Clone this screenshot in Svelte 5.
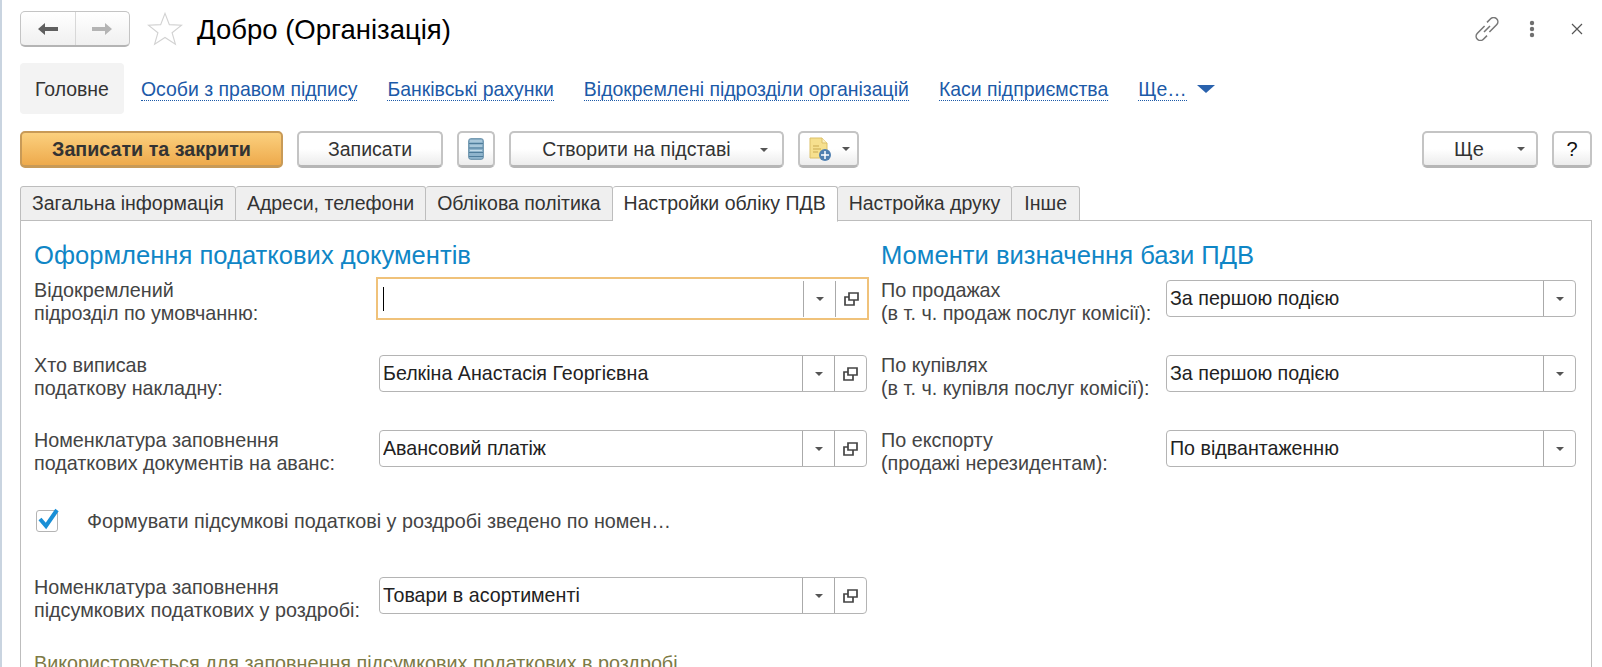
<script lang="ts">
  const links = ['Особи з правом підпису', 'Банківські рахунки', 'Відокремлені підрозділи організацій', 'Каси підприємства'];
  const tabs = ['Загальна інформація', 'Адреси, телефони', 'Облікова політика', 'Настройки обліку ПДВ', 'Настройка друку', 'Інше'];
  const activeTab = 3;
  const moments = [
    { label: ['По продажах', '(в т. ч. продаж послуг комісії):'], value: 'За першою подією' },
    { label: ['По купівлях', '(в т. ч. купівля послуг комісії):'], value: 'За першою подією' },
    { label: ['По експорту', '(продажі нерезидентам):'], value: 'По відвантаженню' }
  ];
</script>

{#snippet openIcon()}
  <svg class="open-icon" viewBox="0 0 15 14" width="15" height="14">
    <path d="M5 1h9v7H5z M5 5H1v8h9V8" fill="none" stroke="#444" stroke-width="1.700" />
  </svg>
{/snippet}

{#snippet field(value: string, focused = false, open = true)}
  <div class="field" class:focused>
    <span class="value">{value}</span>
    {#if focused}<span class="caret"></span>{/if}
    <span class="field-btn"><span class="arrow"></span></span>
    {#if open}<span class="field-btn">{@render openIcon()}</span>{/if}
  </div>
{/snippet}

<div class="page">
  <header class="header">
    <div class="history">
      <button class="hist-btn" aria-label="Назад">
        <svg viewBox="0 0 22 14" width="22" height="14"><path d="M1 7l7-6v4h13v4H8v4z" fill="#5f5f5f" /></svg>
      </button>
      <button class="hist-btn" aria-label="Вперед">
        <svg viewBox="0 0 22 14" width="22" height="14"><path d="M21 7l-7-6v4H1v4h13v4z" fill="#b4b4b4" /></svg>
      </button>
    </div>
    <svg class="star" viewBox="0 0 38 36" width="36" height="34">
      <path d="M19 1.500l4.600 11.900 13 .6-10.100 8 3.500 12-11-7-11 7 3.500-12-10.100-8 13-.6z" fill="none" stroke="#d2d2d2" stroke-width="1.200" />
    </svg>
    <h1 class="title">Добро (Організація)</h1>
    <div class="win-icons">
      <svg viewBox="2 2 20 20" width="24" height="24">
        <path d="M10 9.500l-6 6a3.500 3.500 0 0 0 5 5l3-3M14 14.500l6-6a3.500 3.500 0 0 0-5-5l-3 3M9.500 14.500l5-5" fill="none" stroke="#777" stroke-width="1.300" />
      </svg>
      <svg viewBox="0 0 6 18" width="6" height="18">
        <circle cx="3" cy="3" r="2.200" fill="#6f6f6f" /><circle cx="3" cy="9" r="2.200" fill="#6f6f6f" /><circle cx="3" cy="15" r="2.200" fill="#6f6f6f" />
      </svg>
      <svg class="close" viewBox="0 0 12 12" width="12" height="12">
        <path d="M1 1l10 10M11 1L1 11" stroke="#555" stroke-width="1.200" />
      </svg>
    </div>
  </header>

  <nav class="nav">
    <span class="nav-current">Головне</span>
    {#each links as link}
      <a class="nav-link" href="#top">{link}</a>
    {/each}
    <a class="nav-link more" href="#top">Ще…</a>
    <span class="more-arrow"></span>
  </nav>

  <div class="toolbar">
    <button class="btn primary">Записати та закрити</button>
    <button class="btn save">Записати</button>
    <button class="btn icon" aria-label="Структура">
      <svg viewBox="0 0 16 22" width="16" height="22">
        <rect x="0.700" y="0.700" width="14.600" height="20.600" rx="2" fill="#8fb4cc" stroke="#5f8aa6" />
        <path d="M1 5.500h14M1 10h14M1 14.500h14M1 18.500h14" stroke="#4f7d9b" stroke-width="1.200" />
        <path d="M2 3h12M2 8h12M2 12.500h12" stroke="#c3dbe8" />
      </svg>
    </button>
    <button class="btn create">
      <span>Створити на підставі</span>
      <span class="arrow"></span>
    </button>
    <button class="btn report" aria-label="Створити">
      <svg viewBox="0 0 24 24" width="24" height="24">
        <path d="M2 1h12l5 5v15H2z" fill="#f6e08e" stroke="#dcc069" />
        <path d="M14 1v5h5" fill="#fbf0c0" stroke="#dcc069" />
        <path d="M5 9h6M5 12h8M5 15h5" stroke="#c8a950" />
        <circle cx="17" cy="18" r="6" fill="#4f7fb0" />
        <path d="M17 14v8M13 18h8" stroke="#fff" stroke-width="1.500" />
      </svg>
      <span class="arrow"></span>
    </button>
    <div class="toolbar-right">
      <button class="btn more-btn">
        <span class="more-text">Ще</span>
        <span class="arrow"></span>
      </button>
      <button class="btn help">?</button>
    </div>
  </div>

  <div class="tabs">
    {#each tabs as tab, i}
      <div class="tab" class:active={i === activeTab}>{tab}</div>
    {/each}
  </div>

  <section class="panel">
    <div class="columns">
      <div class="col-left">
        <h2 class="group-title">Оформлення податкових документів</h2>
        <div class="row">
          <div class="label">Відокремлений<br />підрозділ по умовчанню:</div>
          {@render field('', true)}
        </div>
        <div class="row">
          <div class="label">Хто виписав<br />податкову накладну:</div>
          {@render field('Белкіна Анастасія Георгієвна')}
        </div>
        <div class="row">
          <div class="label">Номенклатура заповнення<br />податкових документів на аванс:</div>
          {@render field('Авансовий платіж')}
        </div>
        <div class="check-row">
          <span class="checkbox">
            <svg viewBox="0 0 24 24" width="24" height="24">
              <path d="M4 12l6 7L21 3" fill="none" stroke="#1a8fd6" stroke-width="4" />
            </svg>
          </span>
          <span class="check-label">Формувати підсумкові податкові у роздробі зведено по номен…</span>
        </div>
        <div class="row last">
          <div class="label">Номенклатура заповнення<br />підсумкових податкових у роздробі:</div>
          {@render field('Товари в асортименті')}
        </div>
      </div>
      <div class="col-right">
        <h2 class="group-title">Моменти визначення бази ПДВ</h2>
        {#each moments as m}
          <div class="row">
            <div class="label">{m.label[0]}<br />{m.label[1]}</div>
            {@render field(m.value, false, false)}
          </div>
        {/each}
      </div>
    </div>
    <p class="note">Використовується для заповнення підсумкових податкових в роздробі</p>
  </section>
</div>

<style>
  :global(body) {
    margin: 0;
    background: #fff;
  }

  .page {
    box-sizing: border-box;
    height: 667px;
    overflow: hidden;
    padding: 11px 10px 0 18px;
    border-left: 2px solid #c9d4e0;
    font-family: "Liberation Sans", Arial, sans-serif;
    font-size: 19.750px;
    color: #333;
  }

  button {
    font-family: inherit;
    padding: 0;
    cursor: pointer;
  }

  .header {
    display: flex;
    align-items: center;
    height: 36px;
  }

  .history {
    display: flex;
    width: 110px;
    height: 36px;
    box-sizing: border-box;
    border: 1px solid #c4c4c4;
    border-bottom: 2px solid #b4b4b4;
    border-radius: 5px;
    background: linear-gradient(#fff, #f0f0f0);
  }

  .hist-btn {
    flex: 1;
    border: none;
    background: none;
    display: flex;
    align-items: center;
    justify-content: center;
  }

  .hist-btn + .hist-btn {
    border-left: 1px solid #d8d8d8;
  }

  .star {
    margin-left: 17px;
  }

  .title {
    margin: 2px 0 0 14px;
    font-size: 27.500px;
    font-weight: normal;
    color: #000;
  }

  .win-icons {
    margin-left: auto;
    display: flex;
    align-items: center;
    gap: 30px;
    margin-right: 9px;
  }

  .close {
    margin-left: 6px;
  }

  .nav {
    display: flex;
    align-items: center;
    height: 51px;
    margin-top: 16px;
    font-size: 19.450px;
  }

  .nav-current {
    box-sizing: border-box;
    width: 104px;
    height: 51px;
    line-height: 53px;
    text-align: center;
    background: #f3f3f3;
    border-radius: 4px;
    margin-right: 17px;
  }

  .nav-link {
    color: #1c5aa8;
    text-decoration: none;
    border-bottom: 1px dotted #1c5aa8;
    line-height: 22px;
    margin-top: 2px;
    margin-right: 30px;
  }

  .nav-link.more {
    margin-right: 10px;
  }

  .more-arrow {
    width: 0;
    height: 0;
    border-left: 9px solid transparent;
    border-right: 9px solid transparent;
    border-top: 8px solid #2a62ad;
  }

  .toolbar {
    display: flex;
    align-items: center;
    gap: 14px;
    margin-top: 17px;
  }

  .btn {
    box-sizing: border-box;
    height: 37px;
    border: 2px solid #c4c4c4;
    border-bottom: 3px solid #b6b6b6;
    border-radius: 5px;
    background: linear-gradient(#fff 50%, #ececec);
    font-size: 19.500px;
    color: #333;
    display: flex;
    align-items: center;
    justify-content: center;
  }

  .btn.primary {
    width: 263px;
    background: linear-gradient(#fbd07e, #eeaa4c);
    border-color: #c89a57;
    font-size: 19.700px;
    font-weight: bold;
  }

  .btn.save {
    width: 146px;
  }

  .btn.icon {
    width: 38px;
  }

  .btn.create {
    width: 275px;
    position: relative;
    padding-right: 20px;
  }

  .btn.create .arrow {
    position: absolute;
    right: 14px;
    top: 15px;
  }

  .btn.report {
    width: 61px;
    gap: 10px;
  }

  .toolbar-right {
    margin-left: auto;
    display: flex;
    gap: 14px;
  }

  .btn.more-btn {
    width: 116px;
    gap: 28px;
    padding-left: 14px;
    font-size: 20px;
  }

  .more-text {
    width: 40px;
  }

  .btn.help {
    width: 40px;
    font-size: 20px;
    color: #111;
  }

  .arrow {
    display: inline-block;
    width: 0;
    height: 0;
    border-left: 4px solid transparent;
    border-right: 4px solid transparent;
    border-top: 4px solid #555;
  }

  .tabs {
    display: flex;
    margin-top: 18px;
    height: 35px;
    position: relative;
    z-index: 1;
    font-size: 19.500px;
  }

  .tab {
    box-sizing: border-box;
    height: 35px;
    line-height: 33px;
    padding: 0 11px;
    background: #efefef;
    border: 1px solid #bdbdbd;
    border-left-width: 0;
    border-radius: 3px 3px 0 0;
  }

  .tab:last-child {
    padding: 0 12px;
  }

  .tab:first-child {
    border-left-width: 1px;
  }

  .tab.active {
    background: #fff;
    border-bottom-color: #fff;
    height: 36px;
  }

  .panel {
    box-sizing: border-box;
    margin-top: -1px;
    height: 460px;
    border: 1px solid #bdbdbd;
    padding: 0 15px 0 13px;
  }

  .columns {
    display: flex;
  }

  .col-left {
    width: 833px;
  }

  .col-right {
    margin-left: 14px;
    width: 695px;
  }

  .group-title {
    margin: 20px 0 11px;
    font-size: 25.600px;
    line-height: 28px;
    font-weight: normal;
    color: #0f86c6;
  }

  .row {
    display: flex;
    align-items: center;
    height: 37px;
    margin-bottom: 38px;
  }

  .label {
    width: 345px;
    flex: none;
    box-sizing: border-box;
    padding-top: 7px;
    line-height: 23px;
    color: #444;
    white-space: nowrap;
  }

  .col-right .label {
    width: 285px;
  }

  .field {
    flex: 1;
    box-sizing: border-box;
    height: 37px;
    display: flex;
    align-items: center;
    border: 1px solid #b4b4b4;
    border-radius: 4px;
    background: #fff;
    padding-left: 3px;
    color: #222;
    font-size: 19.650px;
  }

  .field.focused {
    border: 2px solid #f0c27a;
    border-radius: 0;
    height: 43px;
    margin: 0 -2px 0 -3px;
    padding-left: 5px;
  }

  .value {
    flex: 1;
    white-space: nowrap;
    overflow: hidden;
  }

  .caret {
    position: relative;
    width: 1px;
    height: 24px;
    background: #000;
    margin-right: auto;
  }

  .field.focused .value {
    flex: 0;
  }

  .field-btn {
    width: 31px;
    align-self: stretch;
    border-left: 1px solid #aaa;
    display: flex;
    align-items: center;
    justify-content: center;
  }

  .field.focused .field-btn {
    align-self: center;
    height: 36px;
  }

  .check-row {
    display: flex;
    align-items: center;
    height: 24px;
    margin-top: 42px;
  }

  .checkbox {
    position: relative;
    box-sizing: border-box;
    width: 22px;
    height: 22px;
    margin-left: 2px;
    border: 1px solid #b4b4b4;
    border-radius: 3px;
  }

  .checkbox svg {
    position: absolute;
    left: -1px;
    top: -4px;
  }

  .check-label {
    margin-left: 29px;
    color: #444;
  }

  .row.last {
    margin-top: 44px;
    margin-bottom: 0;
  }

  .note {
    margin: 38px 0 0;
    color: #7d7a45;
  }
</style>
